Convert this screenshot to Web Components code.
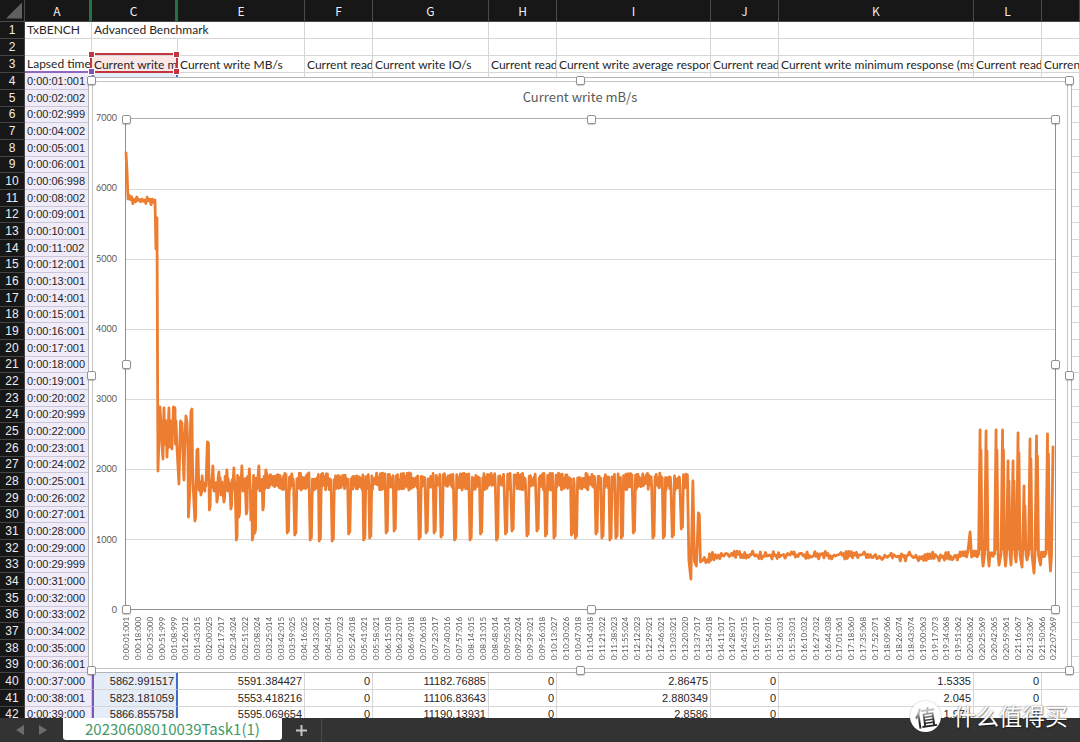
<!DOCTYPE html>
<html lang="en">
<head>
<meta charset="utf-8">
<title>20230608010039Task1</title>
<style>
html, body { margin: 0; height: 100%; }
body { font-family: "Noto Sans CJK SC", "Noto Sans", sans-serif; overflow: hidden; }
</style>
</head>
<body>
<sheet-app></sheet-app>

<template id="app-template">
<style>
:host { display: flex; flex-direction: column; height: 100%; position: relative; background: #fff; }
main { flex: 1; min-height: 0; overflow: hidden; position: relative; }
line-chart { position: absolute; left: 88px; right: 8px; top: 77px; height: 596px; }
site-watermark { position: absolute; right: 12px; bottom: 9px; }
</style>
<main>
  <sheet-grid></sheet-grid>
  <line-chart><span slot="title">Current write mB/s</span></line-chart>
</main>
<sheet-tabs>20230608010039Task1(1)</sheet-tabs>
<site-watermark>什么值得买</site-watermark>
</template>

<template id="grid-template">
<style>
:host { display: block; }
table { table-layout: fixed; width: 100%; border-spacing: 0; color: #262626; font-size: 12px; line-height: 16px; }
th, td { padding: 0 2px; box-sizing: border-box; overflow: hidden; white-space: nowrap; border: 0 solid #d6d6d6; border-width: 0 1px 1px 0; text-align: left; }
td { font-family: Lato, "Noto Sans", sans-serif; }
tr { height: 17px; }
tbody tr:nth-child(3n) { height: 16px; }
tbody tr:nth-child(3n) > * { line-height: 15px; }
thead tr { height: 22px; }
th { background: #171717; color: #eee; font-weight: 400; text-align: center; }
thead th { border-color: #4a4a4a; }
thead th.edge { border-right: 3px solid #217346; }
tbody th { border-color: #444; font-family: "Liberation Sans", Arial, sans-serif; padding: 0; }
td.num { font-family: "Liberation Sans", Arial, sans-serif; font-size: 11px; text-align: right; }
td.time { font-family: "Liberation Sans", Arial, sans-serif; font-size: 11px; background: #efebf8; border-color: #cbc6d8; }
td.val { background: #e5edf9; border-right: 2px solid #3b6fc9; border-left: 2px solid #7d57b5; }
td.spill { overflow: visible; }
td.source { background: #fae7e6; }
td.over { border-bottom: 2px solid #9068c4; line-height: 14px; }
.corner { display: block; width: 16px; height: 16px; margin-left: 4px; background: #606060; clip-path: polygon(100% 0, 100% 100%, 0 100%); }
.mark { position: absolute; left: 90px; top: 53px; width: 84px; height: 16px; border: 2px solid #c33640; }
.mark i { position: absolute; width: 5px; height: 5px; background: #c33640; outline: 1px solid #fff; }
.mark i:nth-child(1) { left: -3px; top: -3px; }
.mark i:nth-child(2) { right: -3px; top: -3px; }
.mark i:nth-child(3) { right: -3px; bottom: -3px; }
.mark i:nth-child(4) { left: -3px; bottom: -3px; background: #7f53b8; }
</style>
<table>
<colgroup></colgroup>
<thead></thead>
<tbody></tbody>
</table>
<div class="mark"><i></i><i></i><i></i><i></i></div>
</template>

<template id="chart-template">
<style>
:host { display: block; box-sizing: border-box; border: 1px solid #b5b5b5; padding: 3px; background: #fff; color: #595959; }
.frame { box-sizing: border-box; height: 100%; border: 1px solid #c4c4c4; display: grid; grid-template-columns: 24px 1fr; grid-template-rows: 36px 492px 1fr; column-gap: 8px; padding-right: 11px; }
h1 { grid-column: 1 / 3; margin: 0 -11px 0 0; padding: 5px 0 0; font-size: 13px; line-height: 20px; font-weight: 400; text-align: center; }
.y { display: flex; flex-direction: column; justify-content: space-between; margin: -6px 0; font: 9px/12px Lato, sans-serif; text-align: right; }
.plot { position: relative; border: 1px solid #8c8c8c; box-sizing: border-box; border-color: #b0b0b0 #909090 #909090; }
svg { display: block; width: 100%; height: 100%; overflow: visible; }
.x { grid-column: 2; display: flex; justify-content: space-between; margin: 7px -3px 0 -4px; font: 8px/10px Lato, sans-serif; }
.x span { writing-mode: vertical-rl; transform: rotate(180deg); width: 10px; height: 46px; text-align: right; white-space: nowrap; }
.outer { inset: 2px; }
</style>
<div class="frame">
  <h1><slot name="title"></slot></h1>
  <div class="y"></div>
  <div class="plot">
    <svg viewBox="0 0 930 490" preserveAspectRatio="none" aria-hidden="true">
      <g class="lines" stroke="#d9d9d9" stroke-width="1"></g>
      <path fill="none" stroke="#ed7d31" stroke-width="2.8" stroke-linejoin="round" stroke-linecap="round" vector-effect="non-scaling-stroke"/>
    </svg>
    <resize-handles></resize-handles>
  </div>
  <div class="x"></div>
</div>
<resize-handles class="outer"></resize-handles>
</template>

<template id="handles-template">
<style>
:host { position: absolute; inset: 0; display: block; pointer-events: none; }
i { position: absolute; width: 7px; height: 7px; margin: -4px; background: #fff; border: 1px solid #929292; border-radius: 2px; box-shadow: 0 1px 1px #0003; }
</style>
</template>

<template id="tabs-template">
<style>
:host { display: flex; height: 24px; padding-left: 8px; background: #333; }
button { border: 0; padding: 0; background: none; font: inherit; }
.nav { width: 23px; display: grid; place-items: center; }
.tab { margin: 0 0 2px 9px; padding: 0 22px; background: #fff; color: #3f9a68; font-size: 15px; line-height: 22px; border-radius: 0 0 3px 3px; }
.add { width: 40px; display: grid; place-items: center; border-right: 1px solid #4c4c4c; }
</style>
<button class="nav" aria-label="Previous sheet"><svg width="8" height="12"><path d="M8 1v10L0 6z" fill="#6c6c6c"/></svg></button>
<button class="nav" aria-label="Next sheet"><svg width="8" height="12"><path d="M0 1v10l8-5z" fill="#6c6c6c"/></svg></button>
<button class="tab"><slot></slot></button>
<button class="add" aria-label="Add sheet"><svg width="11" height="11"><path d="M5.500 0v11M0 5.500h11" stroke="#c4c4c4" stroke-width="2"/></svg></button>
</template>

<template id="mark-template">
<style>
:host { display: flex; align-items: center; gap: 12px; height: 31px; color: #fff; font-size: 23px; line-height: 31px; text-shadow: 0 0 2px #0008, 1px 1px 1px #0005; pointer-events: none; }
.disc { width: 31px; height: 31px; margin-top: -2px; border-radius: 50%; background: #fff; box-shadow: 0 0 2px #0004; text-align: center; }
.name { margin-top: -5px; }
b { display: block; font-size: 22px; line-height: 30px; font-weight: 500; text-shadow: none; transform: rotate(-8deg); color: transparent; background: linear-gradient(#bbb 35%, #222 70%); background-clip: text; -webkit-background-clip: text; }
</style>
<div class="disc"><b>值</b></div>
<div class="name"><slot></slot></div>
</template>

<script>
class TemplateElement extends HTMLElement {
  constructor() {
    super();
    const root = this.attachShadow({ mode: "open" });
    root.append(document.getElementById(this.constructor.template).content.cloneNode(true));
    this.fill(root);
  }
  fill() {}
}

class SheetApp extends TemplateElement { static template = "app-template"; }
class SheetTabs extends TemplateElement { static template = "tabs-template"; }
class SiteWatermark extends TemplateElement { static template = "mark-template"; }

class ResizeHandles extends TemplateElement {
  static template = "handles-template";
  fill(root) {
    for (const [x, y] of [[0,0],[50,0],[100,0],[0,50],[100,50],[0,100],[50,100],[100,100]]) {
      const i = document.createElement("i");
      i.style.left = x + "%";
      i.style.top = y + "%";
      root.append(i);
    }
  }
}

const columns = [["",25],["A",67],["C",86],["E",127],["F",68],["G",116],["H",68],["I",154],["J",68],["K",195],["L",68],["",0]];
const titles = ["Lapsed time", "Current write mB/s", "Current write MB/s", "Current read MB/s", "Current write IO/s", "Current read IO/s", "Current write average response (ms)", "Current read average response", "Current write minimum response (ms)", "Current read minimum", "Current write maximum"];
const times = "0:00:01:001 0:00:02:002 0:00:02:999 0:00:04:002 0:00:05:001 0:00:06:001 0:00:06:998 0:00:08:002 0:00:09:001 0:00:10:001 0:00:11:002 0:00:12:001 0:00:13:001 0:00:14:001 0:00:15:001 0:00:16:001 0:00:17:001 0:00:18:000 0:00:19:001 0:00:20:002 0:00:20:999 0:00:22:000 0:00:23:001 0:00:24:002 0:00:25:001 0:00:26:002 0:00:27:001 0:00:28:000 0:00:29:000 0:00:29:999 0:00:31:000 0:00:32:000 0:00:33:002 0:00:34:002 0:00:35:000 0:00:36:001 0:00:37:000 0:00:38:001 0:00:39:000".split(" ");
const values = {
  4: ["6515.480715", "6213.582887", 0, "12427.17878", 0, "2.558823", 0, "0.9531", 0],
  40: ["5862.991517", "5591.384427", 0, "11182.76885", 0, "2.86475", 0, "1.5335", 0],
  41: ["5823.181059", "5553.418216", 0, "11106.83643", 0, "2.880349", 0, "2.045", 0],
  42: ["5866.855758", "5595.069654", 0, "11190.13931", 0, "2.8586", 0, "1.971", 0]
};

class SheetGrid extends TemplateElement {
  static template = "grid-template";
  fill(root) {
    root.querySelector("colgroup").innerHTML = columns.map(([, w]) => w ? `<col style="width:${w}px">` : "<col>").join("");
    root.querySelector("thead").innerHTML = "<tr>" + columns.map(([n], i) =>
      i ? `<th scope="col"${n === "A" || n === "C" ? ' class="edge"' : ""}>${n}</th>` : '<th><span class="corner"></span></th>').join("") + "</tr>";
    let html = "";
    for (let r = 1; r <= 42; r++) {
      let cells;
      if (r === 1) cells = '<td>TxBENCH</td><td class="spill" colspan="2">Advanced Benchmark</td>' + "<td></td>".repeat(8);
      else if (r === 2) cells = "<td></td>".repeat(11);
      else if (r === 3) cells = titles.map((t, i) => `<td class="${i === 0 ? "over" : i === 1 ? "source" : ""}">${t}</td>`).join("");
      else {
        const row = values[r] || Array(9).fill("");
        cells = `<td class="time">${times[r - 4]}</td>` + row.map((v, i) => `<td class="num${i ? "" : " val"}">${v}</td>`).join("") + "<td></td>";
      }
      html += `<tr><th scope="row">${r}</th>${cells}</tr>`;
    }
    root.querySelector("tbody").innerHTML = html;
  }
}

/* elapsed time at every seventeenth second */
const labels = "0:00:01:001 0:00:18:000 0:00:35:000 0:00:51:999 0:01:08:999 0:01:26:012 0:01:43:015 0:02:00:025 0:02:17:017 0:02:34:024 0:02:51:022 0:03:08:024 0:03:25:014 0:03:42:015 0:03:59:025 0:04:16:025 0:04:33:021 0:04:50:014 0:05:07:023 0:05:24:018 0:05:41:021 0:05:58:021 0:06:15:018 0:06:32:019 0:06:49:018 0:07:06:018 0:07:23:017 0:07:40:016 0:07:57:016 0:08:14:015 0:08:31:015 0:08:48:014 0:09:05:014 0:09:22:024 0:09:39:021 0:09:56:018 0:10:13:027 0:10:30:026 0:10:47:018 0:11:04:018 0:11:21:022 0:11:38:023 0:11:55:024 0:12:12:023 0:12:29:021 0:12:46:021 0:13:03:021 0:13:20:020 0:13:37:017 0:13:54:018 0:14:11:017 0:14:28:017 0:14:45:015 0:15:02:017 0:15:19:016 0:15:36:031 0:15:53:031 0:16:10:032 0:16:27:032 0:16:44:038 0:17:01:061 0:17:18:060 0:17:35:068 0:17:52:071 0:18:09:066 0:18:26:074 0:18:43:074 0:19:00:063 0:19:17:073 0:19:34:068 0:19:51:062 0:20:08:062 0:20:25:069 0:20:42:065 0:20:59:061 0:21:16:067 0:21:33:067 0:21:50:066 0:22:07:069".split(" ");

function throughputPath() {
  const pts = [];
  let seed = 7;
  const rnd = () => (seed = (seed * 16807) % 2147483647) / 2147483647;
  const add = (...list) => { for (let i = 0; i < list.length; i += 2) pts.push([list[i], list[i + 1]]); };
  const band = (from, to, top, bottom, step, rough = 0.25) => {
    let up = true;
    for (let x = from; x < to; x += step) {
      const edge = rnd() * (bottom - top) * rough;
      add(x, up ? top + edge : bottom - edge);
      up = !up;
    }
  };
  add(0,34, 1,52, 2,80);
  band(3, 28, 76, 86, 1.3, 0.6);
  add(29,81, 30,130, 31,99, 32,352, 34,288, 35,303, 36,326, 37,340, 38,289, 39,325, 40,302, 41,338, 43,289, 43.5,328, 44.5,302, 46,330, 47.5,288, 49,289, 49.5,325, 50,302, 51,328, 53,365, 54.5,302, 56,304, 58,361, 59,318, 60,297, 61,303, 62,330, 62.5,398, 64,370, 64.500,310, 65,293, 66,290, 66.500,340, 67,362, 68,383);
  /* settling phase: every excursion falls back to the steady band */
  const settling = [69,402, 71,331, 72,330, 73,371, 75,376, 78,366, 81.5,323, 82.5,324, 83.5,391, 87,347, 89,371, 91,383, 93,353, 95,376, 98,383, 101,351, 105,390, 108,349, 110.5,421, 113,398, 116,347, 118,369, 120.5,395, 123.5,350, 125,401, 126.5,421, 129,414, 133,347, 135,371, 137,391, 140,351];
  for (let i = 0; i < settling.length; i += 2) {
    const sx = settling[i], sy = settling[i + 1];
    const next = settling[i + 2] || 141;
    add(sx, sy);
    if (sy > 380) add(sx + 0.7, sy - 4);
    if (next - sx > 1) {
      add(sx + 1, 372);
      band(sx + 1.2, next - 0.7, 356, 373, 0.8, 0.5);
    }
  }
  const dips = [[162,414],[169.500,416],[185,421],[194,422],[207,422],[223.500,415],[238.500,421],[244.500,419],[261,414],[269,412],[294,420],[301,414],[309,414],[316,418],[329.500,421],[345,421],[355.500,415],[371.500,421],[380.500,415],[387,412],[402,417],[412,412],[420.500,417],[429,419],[446.500,416],[450.500,419],[471,415],[477,419],[485,421],[491,419],[496.500,419],[508.500,414],[528,419],[538.500,419],[547.500,418],[556.500,410]];
  let x = 141;
  for (const [dx, dy] of dips) {
    band(x, dx - 1.4, 354, 371, 0.6, 0.4);
    add(dx - 0.6, dy, dx + 0.3, 390, dx + 0.6, dy - 2);
    x = dx + 1.6;
  }
  band(x, 562, 355, 370, 0.7);
  add(562,356, 563.5,441, 565.5,460, 567.5,362, 569,442, 571,447, 573,394, 574,396, 575,443);
  band(576, 584, 438, 445, 1.5, 0.6);
  band(584, 596, 433, 443, 1.5, 0.6);
  band(596, 740, 432, 440, 1.3, 0.7);
  band(740, 835, 433, 442, 1.3, 0.7);
  band(835, 844, 432, 438, 1.3, 0.5);
  add(845,413, 846.5,438);
  band(847, 853, 432, 438, 1);
  const spikes = [[855,311,858,447],[861,312,864,447],[871,311,874,446],[877.500,311,880.500,447],[883,342,886,446],[888,342,891,443],[893,314,897,448],[899,367,902,441],[905,320,909,454],[911.500,317,915.500,446],[922.500,315,925.500,452]];
  for (const [sx, top, bx, bottom] of spikes) {
    const last = pts[pts.length - 1][0];
    if (sx - last > 5) band(last + 1, sx - 1, 433, 438, 1);
    add(sx - 1.5, 435, sx, top, sx + 0.3, 430, sx + 0.9, top + 20, sx + 2, 436, bx, bottom);
  }
  add(926.5,436, 928,328);
  return "M" + pts.map(p => p.map(n => n.toFixed(1)).join(" ")).join("L");
}

class LineChart extends TemplateElement {
  static template = "chart-template";
  fill(root) {
    root.querySelector(".y").innerHTML = [7000,6000,5000,4000,3000,2000,1000,0].map(n => `<span>${n}</span>`).join("");
    root.querySelector(".x").innerHTML = labels.map(t => `<span>${t}</span>`).join("");
    root.querySelector(".lines").innerHTML = [1,2,3,4,5,6].map(n => `<path d="M0 ${n * 70 + 0.5}H930"/>`).join("");
    root.querySelector("svg > path").setAttribute("d", throughputPath());
  }
}

customElements.define("resize-handles", ResizeHandles);
customElements.define("sheet-grid", SheetGrid);
customElements.define("line-chart", LineChart);
customElements.define("sheet-tabs", SheetTabs);
customElements.define("site-watermark", SiteWatermark);
customElements.define("sheet-app", SheetApp);
</script>
</body>
</html>
